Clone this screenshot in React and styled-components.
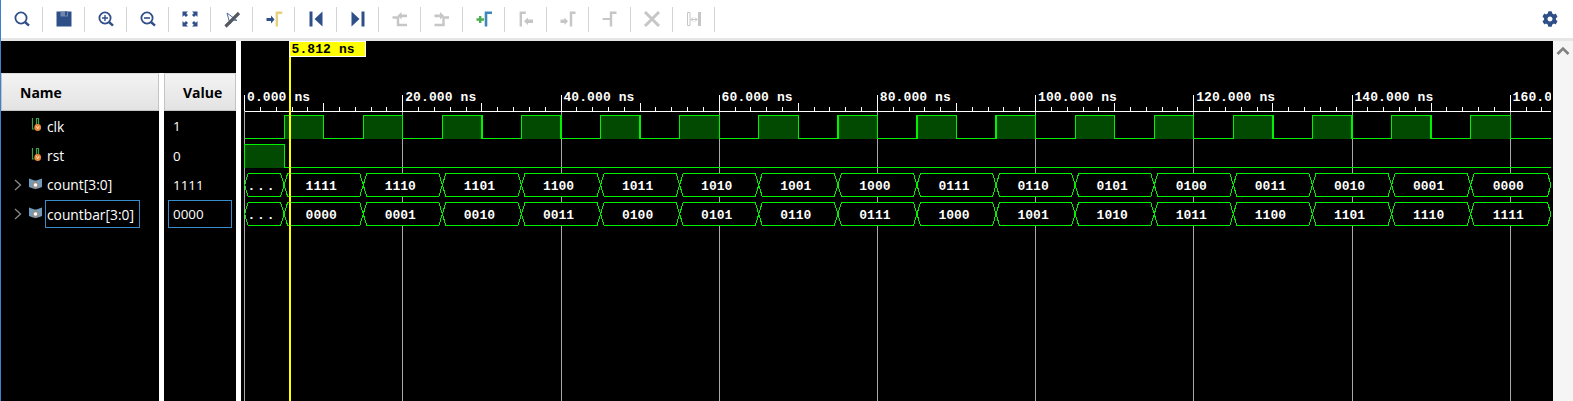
import React from "react";
import styled, { createGlobalStyle } from "styled-components";
import { FaCog } from "react-icons/fa";

const GlobalStyle = createGlobalStyle`
    html, body {
        margin: 0;
        padding: 0;
        height: 100%;
        overflow: hidden;
        background: #000;
    }
`;

const Page = styled.div`
    width: 1573px;
    height: 401px;
    display: flex;
    flex-direction: column;
    box-sizing: border-box;
    border-left: 1px solid #3f7fd0;
    font-family: "Open Sans", "Noto Sans", sans-serif;
`;

const Toolbar = styled.div`
    height: 38px;
    flex: none;
    display: flex;
    align-items: center;
    justify-content: space-between;
    padding-right: 15px;
    background: #fff;
    border-bottom: 3px solid #e6e6e6;
`;

const ToolGroup = styled.div`
    display: flex;
    align-items: center;
`;

const ToolButton = styled.div`
    width: 42px;
    height: 25px;
    box-sizing: border-box;
    display: flex;
    align-items: center;
    justify-content: center;
    border-right: 1px solid #d4d4d4;
`;

const Gear = styled(FaCog)`
    width: 16px;
    height: 16px;
    color: #2f4f88;
`;

const Body = styled.div`
    flex: 1;
    display: flex;
    min-height: 0;
    background: #000;
`;

const SignalPane = styled.div`
    width: 235px;
    flex: none;
    display: flex;
    flex-direction: column;
    padding-top: 32px;
    box-sizing: border-box;
`;

const Columns = styled.div`
    flex: 1;
    display: flex;
`;

const NameColumn = styled.div`
    width: 158px;
    flex: none;
`;

const ValueColumn = styled.div`
    flex: 1;
    border-left: 5px solid #fff;
`;

const HeaderCell = styled.div`
    height: 38px;
    box-sizing: border-box;
    display: flex;
    align-items: center;
    padding-left: ${(p) => p.$inset}px;
    background: linear-gradient(#f3f3f3, #e3e3e3);
    border: 1px solid #c4c4c4;
    border-top-color: #dcdcdc;
    color: #000;
    font-size: 14px;
    font-weight: 700;
`;

const Rows = styled.div`
    display: grid;
    grid-auto-rows: 29.33px;
    padding-top: 0.6px;
`;

const NameRow = styled.div`
    display: flex;
    align-items: center;
    color: #fff;
    font-size: 13.8px;
`;

const Expander = styled.div`
    width: 28px;
    flex: none;
    display: flex;
    justify-content: flex-end;
    padding-right: 7px;
    box-sizing: border-box;
`;

const SignalIcon = styled.svg`
    width: 16px;
    height: 16px;
    flex: none;
`;

const NameLabel = styled.div`
    height: 28px;
    box-sizing: border-box;
    display: flex;
    align-items: center;
    padding: 0 5px 0 1px;
    border: 1px solid ${(p) => (p.$selected ? "#3a8ccb" : "transparent")};
`;

const ValueRow = styled.div`
    display: flex;
    align-items: center;
    padding-left: 4px;
    color: #fff;
    font-size: 13.4px;
`;

const ValueLabel = styled.div`
    width: 64px;
    height: 28px;
    box-sizing: border-box;
    display: flex;
    align-items: center;
    padding-left: 4px;
    border: 1px solid ${(p) => (p.$selected ? "#3a8ccb" : "transparent")};
`;

const WavePane = styled.div`
    flex: 1;
    min-width: 0;
    border-left: 5px solid #fff;
`;

const WaveSvg = styled.svg`
    display: block;
    width: 1312px;
    height: 360px;
    font-family: "Liberation Mono", monospace;
    font-weight: 700;
    font-size: 13px;
`;

const ScrollBar = styled.div`
    width: 20px;
    flex: none;
    background: #f5f5f5;
    display: flex;
    justify-content: center;
    padding-top: 5px;
    box-sizing: border-box;
`;

const NAVY = "#2f4f88";
const GREY = "#c6c6c6";

// toolbar icons, all on a 20x20 box
const Ico = ({ children }) => (
    <svg width="20" height="20" viewBox="0 0 20 20">
        {children}
    </svg>
);

const Lens = () => (
    <g fill="none" stroke={NAVY}>
        <circle cx="9" cy="9" r="5.6" strokeWidth="1.8" />
        <path d="M13 13l4 3.6" strokeWidth="2.4" />
    </g>
);

const Gamma = ({ x, color, width = 2.4, top = 5 }) => (
    <path d={`M${x} 17.5V3.7h${top}`} fill="none" stroke={color} strokeWidth={width} />
);

const toolIcons = [
    <Ico><Lens /></Ico>,
    <Ico>
        <path d="M2.5 2.5h15v15h-15z" fill={NAVY} />
        <path d="M6.5 2.5h7.5v5h-7.5z" fill="#6f86ad" />
        <path d="M11 2.5h2v4h-2z" fill={NAVY} />
    </Ico>,
    <Ico><Lens /><path d="M6 9h6M9 6v6" stroke={NAVY} strokeWidth="1.4" /></Ico>,
    <Ico><Lens /><path d="M6 9h6" stroke={NAVY} strokeWidth="1.6" /></Ico>,
    <Ico>
        <g fill={NAVY}>
            <path d="M2.5 2.5h5.5l-1.800 1.800 1.800 1.800-2 2-1.800-1.800-1.700 1.700z" />
            <path d="M17.500 2.500h-5.500l1.800 1.800-1.800 1.800 2 2 1.800-1.800 1.700 1.700z" />
            <path d="M2.500 17.500h5.500l-1.800-1.800 1.800-1.800-2-2-1.800 1.800-1.700-1.700z" />
            <path d="M17.500 17.500h-5.500l1.800-1.800-1.800-1.800 2-2 1.800 1.800 1.700-1.700z" />
        </g>
    </Ico>,
    <Ico>
        <path d="M5 4l3 11 2.500-4 4.500 .5z" fill="none" stroke="#4d70a8" strokeWidth="1" />
        <path d="M3.500 17.500L17 4" stroke="#55595f" strokeWidth="3.200" />
    </Ico>,
    <Ico>
        <path d="M2.500 9h4.500V6.500l3.500 4-3.500 4V12H2.500z" fill={NAVY} />
        <Gamma x={12.8} color="#e6d27a" width={2.4} top={5.500} />
    </Ico>,
    <Ico>
        <path d="M3.500 2.500h3v15h-3z" fill={NAVY} />
        <path d="M16.500 2.500v15l-8-7.500z" fill={NAVY} />
    </Ico>,
    <Ico>
        <path d="M13.500 2.500h3v15h-3z" fill={NAVY} />
        <path d="M3.500 2.500v15l8-7.500z" fill={NAVY} />
    </Ico>,
    <Ico>
        <path d="M2.500 8.500h5.500v7.500h9" fill="none" stroke={GREY} strokeWidth="2.400" />
        <path d="M17 5.500h-5.500V3l-4 3.800 4 3.800V8.200h5.500z" fill={GREY} />
    </Ico>,
    <Ico>
        <path d="M2.500 16h9V8.500h5.500" fill="none" stroke={GREY} strokeWidth="2.400" />
        <path d="M2.500 5.500h5.500V3l4 3.800-4 3.800V8.200H2.500z" fill={GREY} />
    </Ico>,
    <Ico>
        <path d="M2.500 10.500h7.500M6.200 7v7" stroke="#4cb050" strokeWidth="2.400" />
        <Gamma x={12} color="#3f87bb" width={2.600} top={6} />
    </Ico>,
    <Ico>
        <Gamma x={4.800} color={GREY} top={5} />
        <path d="M17 10.500h-5V8.500l-4 3.700 4 3.700v-2h5z" fill={GREY} />
    </Ico>,
    <Ico>
        <path d="M2.500 10.500h4V8.500l3.500 3.700-3.500 3.700v-2h-4z" fill={GREY} />
        <Gamma x={13} color={GREY} top={4.500} />
    </Ico>,
    <Ico>
        <path d="M2.500 10h7.500" stroke={GREY} strokeWidth="2" />
        <Gamma x={11} color={GREY} top={5.500} />
    </Ico>,
    <Ico>
        <path d="M3 3l14 14M17 3L3 17" stroke={GREY} strokeWidth="3" />
    </Ico>,
    <Ico>
        <path d="M3.500 3.500h2.500v13h-2.500z" fill="none" stroke={GREY} />
        <path d="M14 3h3v14h-3z" fill={GREY} />
        <path d="M7 10.500h6M7 10.500l2-2M7 10.500l2 2M13 10.500l-2-2M13 10.500l-2 2" stroke={GREY} fill="none" />
    </Ico>,
];

const Chevron = () => (
    <svg width="8" height="12" viewBox="0 0 8 12">
        <path d="M1 1l5.500 5-5.500 5" fill="none" stroke="#8a8a8a" strokeWidth="1.300" />
    </svg>
);

const LogicIcon = () => (
    <SignalIcon viewBox="0 0 16 16">
        <path d="M3.500 0v11h2M3.500 0M7.500 0v8M9.500 0v6M7.500 .5h2" fill="none" stroke="#3fa04a" strokeWidth="1.200" />
        <circle cx="8.700" cy="9.500" r="3.400" fill="#e8883a" />
        <path d="M7.400 8.300l1.300 2.600 1.300-2.600" fill="none" stroke="#fbe3c8" strokeWidth=".9" />
    </SignalIcon>
);

const BusIcon = () => (
    <SignalIcon viewBox="0 0 16 16">
        <path d="M0 1.500l5.500 2h2l5.500-2V10l-4 1.500h-5L0 10z" fill="#6f9cbd" />
        <path d="M6.500 3.800l3.900 2.100v4.300l-3.900 2.100-3.900-2.100V5.900z" fill="#8f8f8f" />
        <circle cx="6.500" cy="8" r="1.800" fill="#fff" />
    </SignalIcon>
);

// waveform geometry, in page pixels
const T0 = 244.6;
const PX_PER_NS = 7.91;
const END = 1551;
const GREEN = "#00f000";
const DARK_GREEN = "#024a02";
const xAt = (ns) => T0 + ns * PX_PER_NS;

const signals = [
    { name: "clk", value: "1", kind: "logic" },
    { name: "rst", value: "0", kind: "logic" },
    { name: "count[3:0]", value: "1111", kind: "bus" },
    { name: "countbar[3:0]", value: "0000", kind: "bus", selected: true },
];

const binary = (n) => n.toString(2).padStart(4, "0");
const countValues = Array.from({ length: 16 }, (_, i) => binary(15 - i));
const countbarValues = Array.from({ length: 16 }, (_, i) => binary(i));

const Ruler = () => {
    const ticks = [];
    for (let ns = 0; xAt(ns) <= END; ns += 2) ticks.push(ns);
    const labels = ticks.filter((ns) => ns % 20 === 0);
    return (
        <g>
            {labels.map((ns) => (
                <line key={ns} x1={xAt(ns)} x2={xAt(ns)} y1="111" y2="401" stroke="#a8a8a8" shapeRendering="crispEdges" />
            ))}
            <line x1={T0} x2={END} y1="111.5" y2="111.5" stroke="#fff" shapeRendering="crispEdges" />
            {ticks.map((ns) => {
                const top = ns % 20 === 0 ? 95 : ns % 10 === 0 ? 103 : 107;
                return <line key={ns} x1={xAt(ns)} x2={xAt(ns)} y1={top} y2="111" stroke="#fff" shapeRendering="crispEdges" />;
            })}
            <g clipPath="url(#waveClip)">
                {labels.map((ns) => (
                    <text key={ns} x={xAt(ns) + 2.4} y="101" fill="#fff" letterSpacing=".1">
                        {`${ns}.000 ns`}
                    </text>
                ))}
            </g>
        </g>
    );
};

const PulseRow = ({ high, low, pulses }) => (
    <g shapeRendering="crispEdges">
        {pulses.map(([a, b]) => (
            <rect key={a} x={xAt(a)} y={high} width={xAt(b) - xAt(a)} height={low - high} fill={DARK_GREEN} />
        ))}
        <path
            d={
                `M${T0} ${low}` +
                pulses.map(([a, b]) => `L${xAt(a)} ${low}L${xAt(a)} ${high}L${xAt(b)} ${high}L${xAt(b)} ${low}`).join("") +
                `L${END} ${low}`
            }
            fill="none"
            stroke={GREEN}
            strokeWidth="1.300"
        />
    </g>
);

const BusRow = ({ top, bottom, values }) => {
    const mid = (top + bottom) / 2;
    const edges = [T0, ...values.map((_, i) => xAt(5 + i * 10))];
    const labels = ["...", ...values];
    return (
        <g>
            {labels.map((label, i) => {
                const a = edges[i];
                const b = i + 1 < edges.length ? edges[i + 1] : END;
                return (
                    <g key={i}>
                        <path
                            d={`M${a} ${mid}L${a + 3.5} ${top}L${b - 3.5} ${top}L${b} ${mid}L${b - 3.5} ${bottom}L${a + 3.5} ${bottom}Z`}
                            fill="#000"
                            stroke={GREEN}
                            shapeRendering="crispEdges"
                        />
                        <text
                            x={(a + b) / 2 - 2.500}
                            y={mid + 4.500}
                            fill="#fff"
                            textAnchor="middle"
                            letterSpacing={label === "..." ? 1.800 : 0}
                        >
                            {label}
                        </text>
                    </g>
                );
            })}
        </g>
    );
};

const clkPulses = Array.from({ length: 16 }, (_, i) => [5 + i * 10, 10 + i * 10]);

const Wave = () => {
    return (
        <WaveSvg viewBox="241 41 1312 360">
            <defs>
                <clipPath id="waveClip">
                    <rect x="241" y="41" width={END - 241} height="360" />
                </clipPath>
            </defs>
            <Ruler />
            <PulseRow high={115.5} low={138.5} pulses={clkPulses} />
            <PulseRow high={144.5} low={167.5} pulses={[[0, 5]]} />
            <BusRow top={173.5} bottom={196.5} values={countValues} />
            <BusRow top={202.5} bottom={225.5} values={countbarValues} />
            <rect x="289" y="41" width="2" height="360" fill="#ffff00" shapeRendering="crispEdges" />
            <rect x="289.500" y="41.500" width="76" height="15" fill="#ffff00" stroke="#fff" shapeRendering="crispEdges" />
            <text x="291.500" y="53" fill="#000" letterSpacing=".1">
                5.812 ns
            </text>
        </WaveSvg>
    );
};

const App = () => {
    return (
        <Page>
            <GlobalStyle />
            <Toolbar>
                <ToolGroup>
                    {toolIcons.map((icon, i) => (
                        <ToolButton key={i}>{icon}</ToolButton>
                    ))}
                </ToolGroup>
                <Gear />
            </Toolbar>
            <Body>
                <SignalPane>
                    <Columns>
                        <NameColumn>
                            <HeaderCell $inset={18}>Name</HeaderCell>
                            <Rows>
                                {signals.map((s) => (
                                    <NameRow key={s.name}>
                                        <Expander>{s.kind === "bus" && <Chevron />}</Expander>
                                        {s.kind === "bus" ? <BusIcon /> : <LogicIcon />}
                                        <NameLabel $selected={s.selected}>{s.name}</NameLabel>
                                    </NameRow>
                                ))}
                            </Rows>
                        </NameColumn>
                        <ValueColumn>
                            <HeaderCell $inset={18}>Value</HeaderCell>
                            <Rows>
                                {signals.map((s) => (
                                    <ValueRow key={s.name}>
                                        <ValueLabel $selected={s.selected}>{s.value}</ValueLabel>
                                    </ValueRow>
                                ))}
                            </Rows>
                        </ValueColumn>
                    </Columns>
                </SignalPane>
                <WavePane>
                    <Wave />
                </WavePane>
                <ScrollBar>
                    <svg width="14" height="10" viewBox="0 0 14 10">
                        <path d="M1.500 8l5.500-5.500L12.500 8" fill="none" stroke="#808080" strokeWidth="2.600" />
                    </svg>
                </ScrollBar>
            </Body>
        </Page>
    );
};

export default App;
